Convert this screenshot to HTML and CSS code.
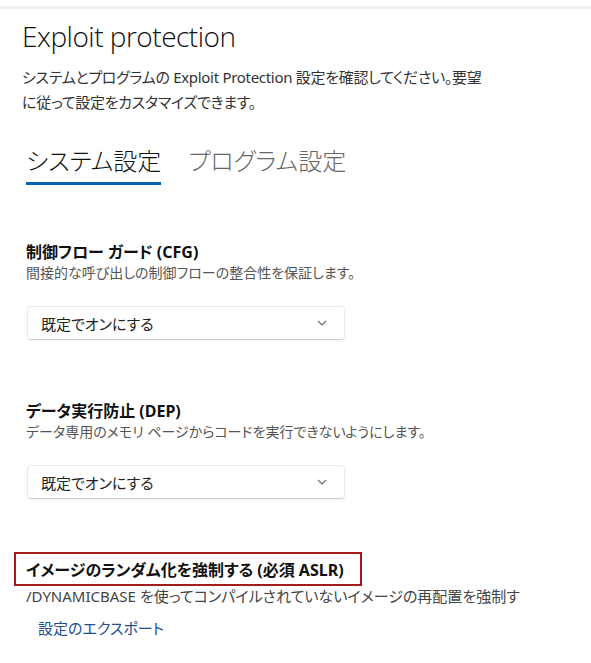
FILE: index.html
```html
<!DOCTYPE html>
<html lang="ja">
<head>
    <meta charset="UTF-8">
    <meta name="viewport" content="width=device-width, initial-scale=1.0">
    <title>Exploit protection</title>
    <link rel="stylesheet" href="styles.css">
</head>
<body>
    <div class="topbar"></div>

    <!-- Scrollable settings area -->
    <div id="content">
        <div class="intro">
            <h1>Exploit protection</h1>
            <p class="lead">システムとプログラムの Exploit Protection 設定を確認してください。要望に従って設定をカスタマイズできます。</p>
        </div>

        <div class="tabs">
            <span class="tab active">システム設定</span>
            <span class="tab">プログラム設定</span>
        </div>

        <div class="setting">
            <h3>制御フロー ガード (CFG)</h3>
            <p class="desc">間接的な呼び出しの制御フローの整合性を保証します。</p>
            <div class="select">
                <span>既定でオンにする</span>
                <svg class="chevron" width="10" height="6" viewBox="0 0 10 6"><path d="M1 1l4 4 4-4" fill="none" stroke="#666" stroke-width="1.1"/></svg>
            </div>
        </div>

        <div class="setting">
            <h3>データ実行防止 (DEP)</h3>
            <p class="desc">データ専用のメモリ ページからコードを実行できないようにします。</p>
            <div class="select">
                <span>既定でオンにする</span>
                <svg class="chevron" width="10" height="6" viewBox="0 0 10 6"><path d="M1 1l4 4 4-4" fill="none" stroke="#666" stroke-width="1.1"/></svg>
            </div>
        </div>

        <div class="setting">
            <h3 class="marked">イメージのランダム化を強制する (必須 ASLR)</h3>
            <p class="desc wide">/DYNAMICBASE を使ってコンパイルされていないイメージの再配置を強制する</p>
        </div>
    </div>

    <!-- Footer link -->
    <div id="footer">
        <a href="#">設定のエクスポート</a>
    </div>
</body>
</html>
```

FILE: styles.css
```css
body {
    font-family: "Noto Sans", "Noto Sans CJK JP", sans-serif;
    font-feature-settings: "palt";
    margin: 0;
    padding: 0;
    display: flex;
    flex-direction: column;
    height: 100vh;
    overflow: hidden;
    background-color: #fff;
    color: #1a1a1a;
}

.topbar {
    margin-top: 6px;
    height: 3px;
    background-color: #f0f0f0;
    flex-shrink: 0;
}

#content {
    flex: 1;
    overflow: hidden;
    padding-left: 26px;
}

.intro {
    margin-left: -4px;
}

h1 {
    margin: 9px 0 0;
    font-family: "Open Sans", "Noto Sans", sans-serif;
    font-weight: 300;
    font-size: 28px;
    line-height: 36px;
    letter-spacing: -0.5px;
    color: #111;
}

.lead {
    margin: 11px 0 0;
    max-width: 465px;
    font-size: 15px;
    line-height: 25px;
    letter-spacing: -0.3px;
    color: #333;
}

.tabs {
    display: flex;
    gap: 27px;
    margin-top: 30px;
}

.tab {
    font-size: 24px;
    font-weight: 300;
    line-height: 32px;
    color: #666;
    padding-bottom: 5px;
    border-bottom: 3px solid transparent;
}

.tab.active {
    color: #111;
    border-bottom-color: #0063b1;
}

.setting h3 {
    margin: 56px 0 0;
    font-size: 16px;
    line-height: 22px;
    font-weight: bold;
    color: #111;
}

.setting + .setting h3 {
    margin-top: 60px;
}

.desc {
    margin: 0;
    font-size: 14px;
    line-height: 20px;
    color: #555;
}

.desc.wide {
    font-size: 15px;
    line-height: 21px;
    color: #444;
    max-width: 500px;
}

.select {
    display: flex;
    align-items: center;
    justify-content: space-between;
    width: 318px;
    height: 34px;
    box-sizing: border-box;
    margin: 23px 0 0 1px;
    padding: 0 17px 0 13px;
    border: 1px solid #ebebeb;
    border-bottom-color: #d0d0d0;
    border-radius: 4px;
    box-shadow: 0 1px 2px rgba(0, 0, 0, 0.06);
    font-size: 15px;
    color: #222;
}

.setting + .setting h3.marked {
    width: fit-content;
    margin: 53px 0 0 -12px;
    padding: 5px 16px 3px 10px;
    border: 2px solid #a31b1b;
}

#footer {
    height: 53px;
    flex-shrink: 0;
    background-color: #fff;
    padding-left: 38px;
    box-sizing: border-box;
}

#footer a {
    display: block;
    padding-top: 7px;
    font-size: 15px;
    line-height: 22px;
    color: #1d4f8c;
    text-decoration: none;
}
```
